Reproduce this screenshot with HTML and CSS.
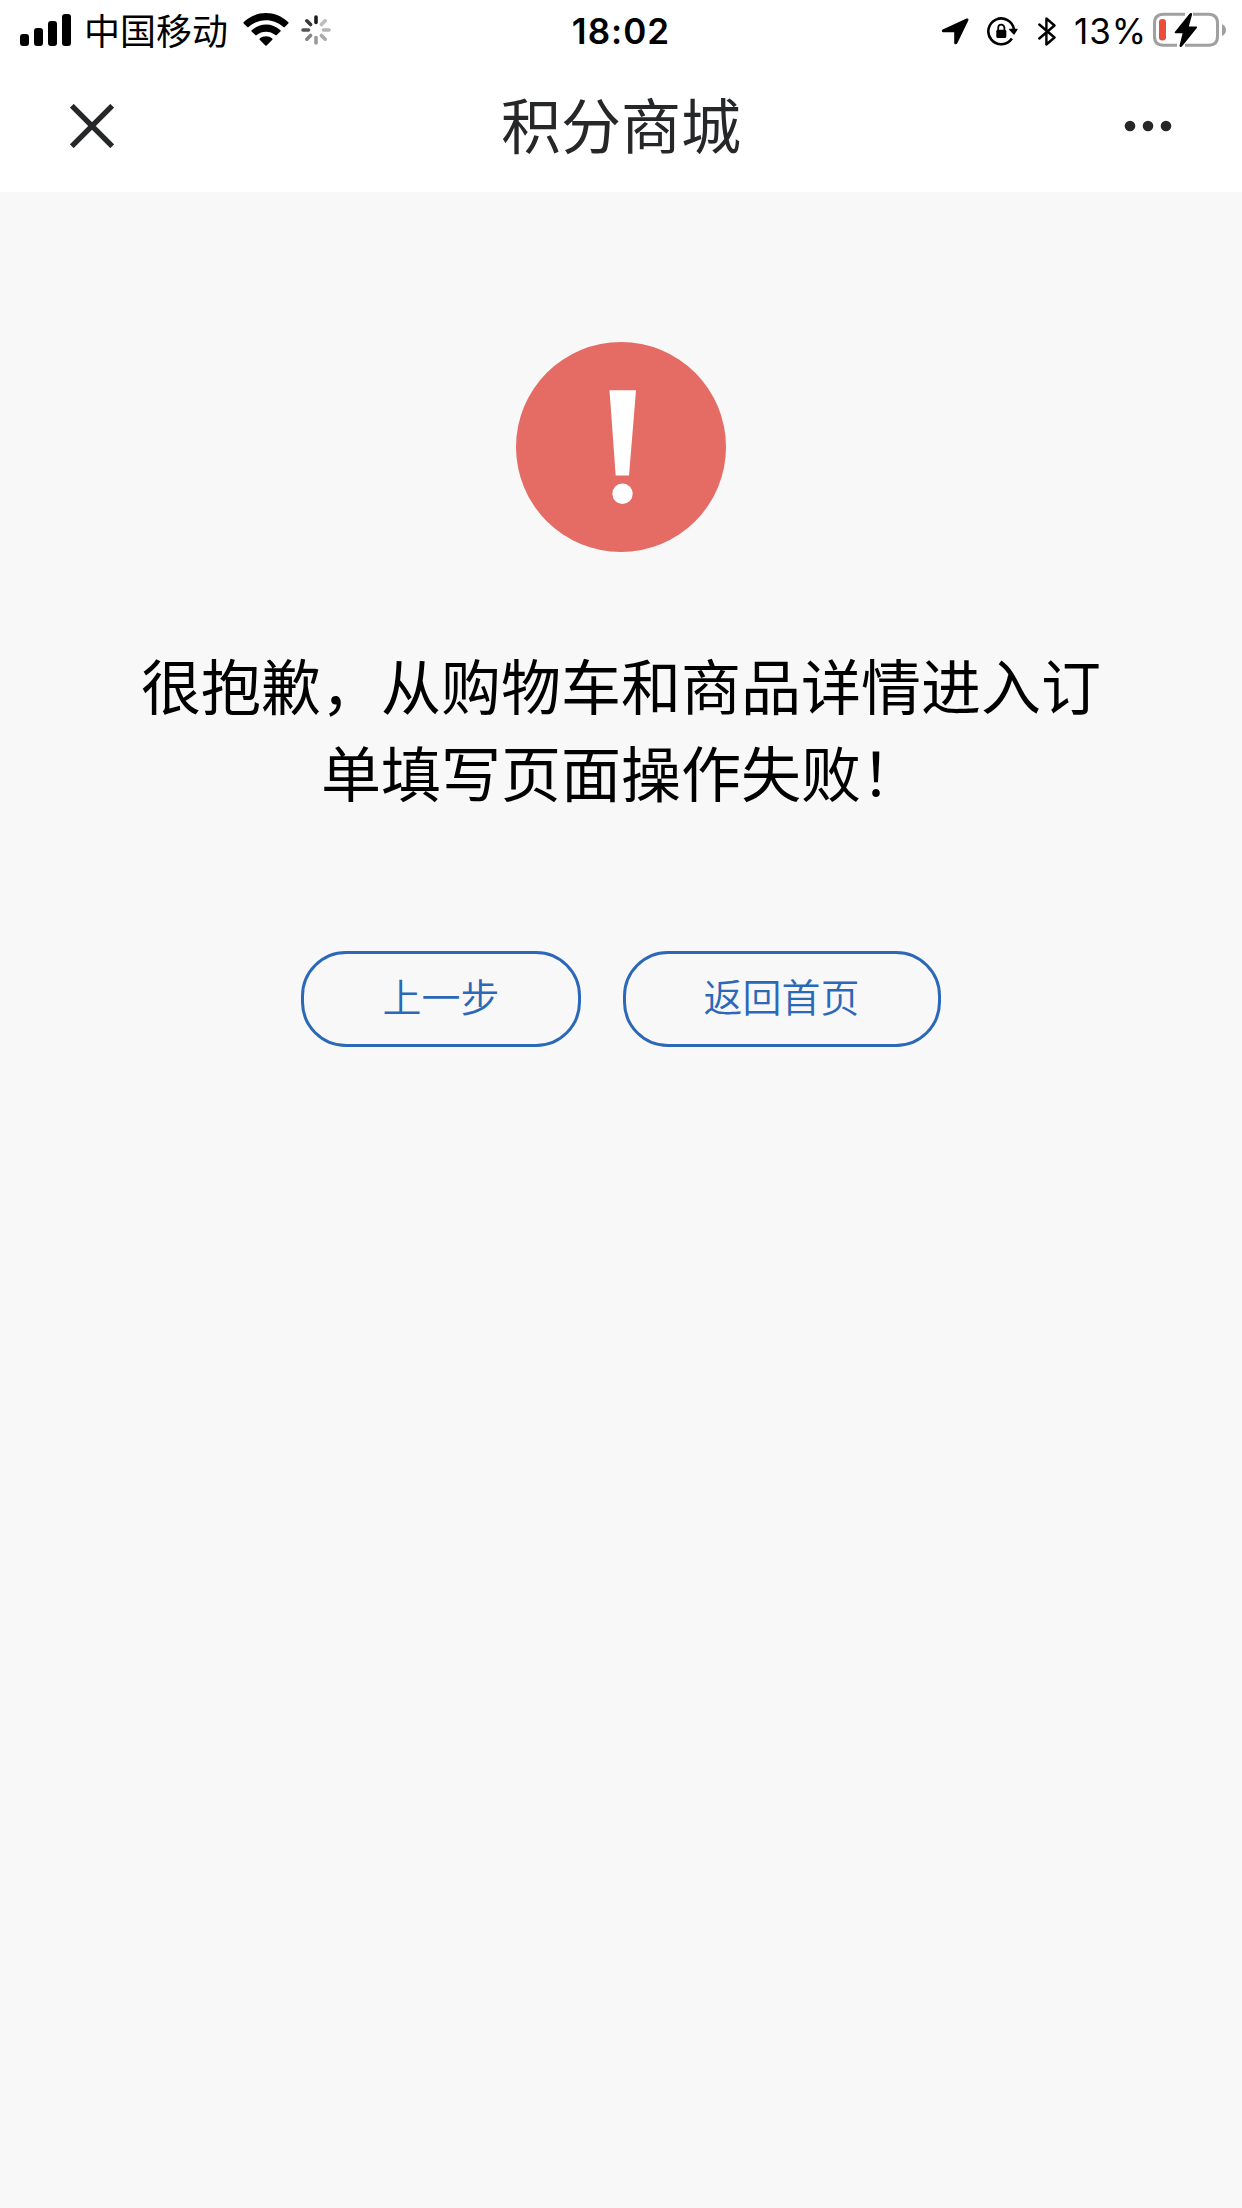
FILE: index.html
```
<!DOCTYPE html>
<html lang="zh-CN">
<head>
    <meta charset="UTF-8">
    <title>积分商城</title>
    <link rel="stylesheet" href="styles.css">
</head>
<body>
    <header class="header">
        <div class="status-bar">
            <div class="status-left">
                <svg class="signal" width="52" height="32" viewBox="0 0 52 32">
                    <rect x="0" y="20" width="9" height="12" rx="3"/>
                    <rect x="14" y="14" width="9" height="18" rx="3"/>
                    <rect x="28" y="7" width="9" height="25" rx="3"/>
                    <rect x="42" y="0" width="9" height="32" rx="3"/>
                </svg>
                <span class="carrier">中国移动</span>
                <svg class="wifi" width="46" height="34" viewBox="0 0 46 34">
                    <path d="M0.5 9.2Q0.1 9.8 0.7 10.4L4.2 13.9Q4.9 14.6 5.6 13.9C15.5 4.9 30.5 4.9 40.4 13.9Q41.1 14.6 41.8 13.9L45.3 10.4Q45.9 9.8 45.3 9.2C32.5 -3 13.3 -3 0.5 9.2Z"/>
                    <path d="M8.6 17.3Q8 17.9 8.6 18.5L12.3 22.1Q12.9 22.7 13.6 22.1C19 17.5 27 17.5 32.4 22.1Q33.1 22.7 33.7 22.1L37.4 18.5Q38 17.9 37.4 17.3C29 9.7 17 9.7 8.6 17.3Z"/>
                    <path d="M16.7 25.5Q16.1 26.2 16.7 26.8L22.4 32.5Q23 33.1 23.6 32.5L29.3 26.8Q29.9 26.2 29.3 25.5C25.6 22.5 20.4 22.5 16.7 25.5Z"/>
                </svg>
                <svg class="spinner" width="30" height="30" viewBox="-15 -15 30 30">
                    <path stroke="#1c1c1c" d="M0 -7.5V-13"/>
                    <path stroke="#bbb" d="M5.4 -5.4L9.2 -9.2"/>
                    <path stroke="#b5b5b5" d="M7.5 0H13"/>
                    <path stroke="#aaa" d="M5.4 5.4L9.2 9.2"/>
                    <path stroke="#9a9a9a" d="M0 7.5V13"/>
                    <path stroke="#858585" d="M-5.4 5.4L-9.2 9.2"/>
                    <path stroke="#555" d="M-7.5 0H-13"/>
                    <path stroke="#383838" d="M-5.4 -5.4L-9.2 -9.2"/>
                </svg>
            </div>
            <span class="time">18:02</span>
            <div class="status-right">
                <svg class="location" width="27" height="27" viewBox="0 0 27 27">
                    <path d="M0.7 11.5L24.5 0.6Q27 -0.1 26.3 2.5L15.3 25.3C14.6 26.8 12.2 26.4 12.2 24.7V14.3H1.5C-0.3 14.3 -0.5 12.1 0.7 11.5Z"/>
                </svg>
                <svg class="lock" width="31" height="29" viewBox="0 0 31 29">
                    <path class="line" d="M24.9 21.6A12.9 12.9 0 1 1 27 12.5"/>
                    <path d="M22.2 11.7H30.2Q31.2 11.7 30.6 12.6L27.6 17.3Q27 18.2 26.3 17.3L22.1 12.7Z"/>
                    <rect x="9.3" y="12.7" width="10" height="8.3" rx="1.5"/>
                    <path class="shackle" d="M11.2 13.5V10.8A3.1 3.1 0 0 1 17.4 10.8V13.5"/>
                </svg>
                <svg class="bluetooth" width="18" height="29" viewBox="0 0 18 29">
                    <path d="M1.3 7.5L16.5 20.5L8.4 27.5V1.5L16.5 8.5L1.3 21.5"/>
                </svg>
                <span class="percent">13%</span>
                <svg class="battery" width="74" height="36" viewBox="0 0 74 36">
                    <path class="shell" d="M32 2.3H10.5Q1.5 2.3 1.5 11.3V24.2Q1.5 33.2 10.5 33.2H24M40 2.3H55.5Q64.5 2.3 64.5 11.3V24.2Q64.5 33.2 55.5 33.2H32"/>
                    <path class="cap" d="M69 12Q73 14 73 18Q73 22 69 24Z"/>
                    <rect class="level" x="6" y="7" width="7" height="21.5" rx="3.2"/>
                    <path d="M36.5 1.7L21.8 20.1Q21.2 21.2 22.4 21.3H29.6L26.6 33.2C26.2 35 28 35.7 29.1 34.3L43.8 15.9Q44.6 14.7 43.2 14.6H35.8L39.1 2.5C39.5 0.7 37.5 0.4 36.5 1.7Z"/>
                </svg>
            </div>
        </div>
        <div class="nav-bar">
            <svg class="close" width="44" height="44" viewBox="0 0 44 44">
                <path d="M1.8 1.8L42.2 42.2M42.2 1.8L1.8 42.2"/>
            </svg>
            <h1 class="title">积分商城</h1>
            <svg class="more" width="48" height="12" viewBox="0 0 48 12">
                <circle cx="6" cy="6" r="5.3"/>
                <circle cx="24" cy="6" r="5.3"/>
                <circle cx="42" cy="6" r="5.3"/>
            </svg>
        </div>
    </header>

    <main class="content">
        <svg class="warn-icon" width="210" height="210" viewBox="0 0 210 210">
            <circle cx="105" cy="105" r="105" fill="#e56c64"/>
            <path fill="#fff" d="M93.5 48.3H120L113 133.5H99.7Z"/>
            <circle cx="106.5" cy="151.7" r="10.2" fill="#fff"/>
        </svg>
        <p class="message">很抱歉，从购物车和商品详情进入订单填写页面操作失败！</p>
        <div class="actions">
            <button class="btn">上一步</button>
            <button class="btn">返回首页</button>
        </div>
    </main>
</body>
</html>
```
FILE: styles.css
```
body {
    margin: 0;
    min-height: 2208px;
    background-color: #f8f8f8;
    color: #000;
    font-family: Inter, "Noto Sans CJK SC", sans-serif;
}
svg {
    display: block;
    flex: none;
}
.header {
    height: 192px;
    background-color: #fff;
}
.status-bar {
    box-sizing: border-box;
    display: grid;
    grid-template-columns: 1fr auto 1fr;
    align-items: center;
    height: 60px;
    padding: 2px 15px 0;
    font-size: 35px;
    line-height: 58px;
}
.status-left,
.status-right {
    display: flex;
    align-items: center;
}
.status-right {
    justify-content: flex-end;
}
.signal {
    margin: 0 0 2px 5px;
}
.carrier {
    margin: 0 0 4px 12px;
    font-family: "Noto Sans CJK SC", sans-serif;
    font-size: 36px;
    line-height: 54px;
}
.wifi {
    margin: 0 0 2px 15px;
}
.spinner {
    margin: 0 0 2px 12px;
}
.spinner path {
    stroke-width: 3.6;
    stroke-linecap: round;
}
.time {
    font-weight: 600;
    letter-spacing: 1px;
}
.lock {
    margin-left: 18px;
}
.lock .line,
.lock .shackle {
    fill: none;
    stroke: #000;
    stroke-width: 2.6;
}
.lock .shackle {
    stroke-width: 1.8;
}
.bluetooth {
    margin-left: 20px;
}
.bluetooth path {
    fill: none;
    stroke: #000;
    stroke-width: 2.4;
    stroke-linejoin: round;
    stroke-linecap: round;
}
.percent {
    margin-left: 18px;
    letter-spacing: 0.9px;
}
.battery {
    margin: 0 0 2px 6px;
}
.battery .shell {
    fill: none;
    stroke: #a0a0a0;
    stroke-width: 3;
}
.battery .cap {
    fill: #a0a0a0;
}
.battery .level {
    fill: #eb4d3d;
}
.nav-bar {
    display: grid;
    grid-template-columns: 1fr auto 1fr;
    align-items: center;
    height: 132px;
    padding: 0 70px;
}
.close path {
    stroke: #262729;
    stroke-width: 5.4;
}
.title {
    margin: 0;
    padding-top: 2px;
    color: #262729;
    font-size: 60px;
    font-weight: 400;
    line-height: 130px;
}
.more {
    justify-self: end;
    fill: #262729;
}
.content {
    display: flex;
    flex-direction: column;
    align-items: center;
    padding-top: 150px;
}
.message {
    width: 960px;
    margin: 93px 0 0;
    font-size: 60px;
    line-height: 87px;
    text-align: center;
}
.actions {
    display: flex;
    gap: 42px;
    margin-top: 132px;
}
.btn {
    height: 96px;
    padding: 0 78px 8px;
    border: 3px solid #2c68b8;
    border-radius: 45px;
    background: none;
    color: #2c68b8;
    font-family: "Noto Sans CJK SC", sans-serif;
    font-size: 39px;
    font-weight: 350;
}
```
